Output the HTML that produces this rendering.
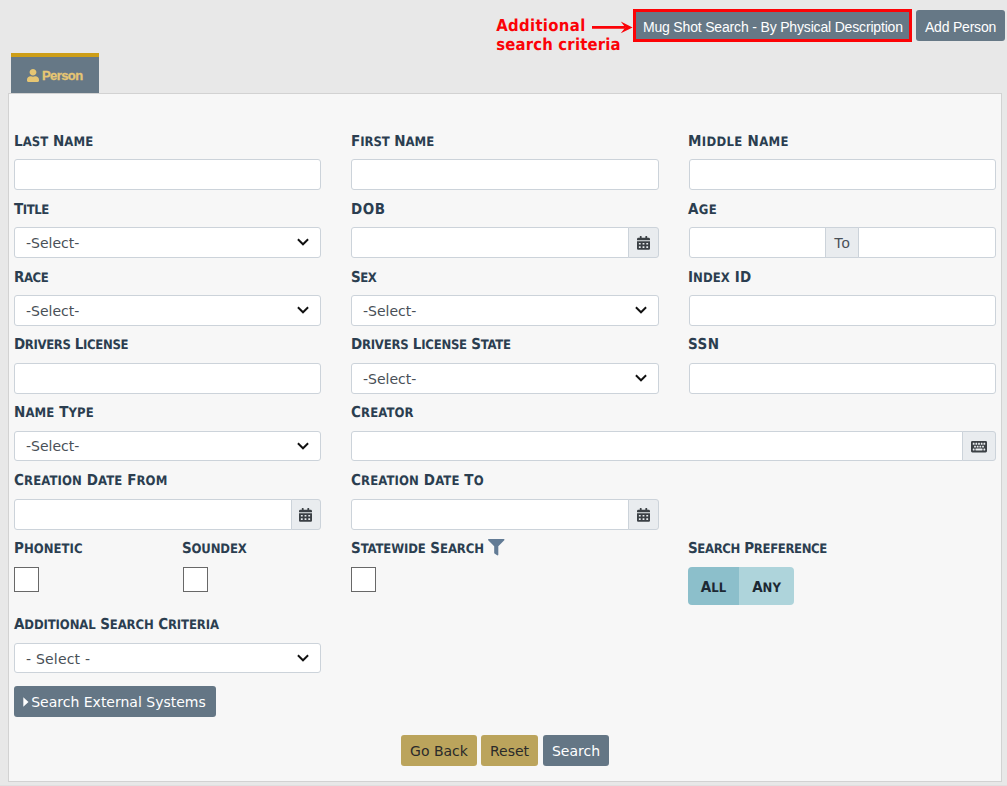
<!DOCTYPE html>
<html lang="en">
<head>
<meta charset="utf-8">
<title>Person Search</title>
<style>
*{box-sizing:border-box;margin:0;padding:0}
html,body{width:1007px;height:786px;overflow:hidden}
body{background:#e8e8e8;font-family:"Liberation Sans",sans-serif;position:relative;color:#2b3e50}
.abs{position:absolute}
.panel{position:absolute;left:8px;top:93px;width:994px;height:689px;background:#f7f7f7;border:1px solid #d2d2d2}
.tab{position:absolute;left:11px;top:53px;width:88px;height:40px;background:#667886;border-top:4px solid #cd9e18;color:#e6c673;font:bold 13px "Liberation Sans",sans-serif}
.tab span{position:absolute;left:31px;top:10.500px;letter-spacing:-0.600px;line-height:16px;-webkit-text-stroke:0.300px #e6c673}
.tab svg{position:absolute;left:16px;top:12px}
.btn{position:absolute;background:#667886;color:#fff;border-radius:3px;font:14px "Liberation Sans",sans-serif;text-align:center;white-space:nowrap}
.lbl{position:absolute;text-rendering:geometricPrecision;font:bold 15px "DejaVu Sans Condensed","Liberation Sans",sans-serif;color:#2b3e50;white-space:nowrap;line-height:20px;height:20px;margin-left:-1px}
.lbl i,.tog i{font-style:normal;text-transform:uppercase;font-size:13px}
.inp{position:absolute;height:31px;background:#fff;border:1px solid #ccd3da;border-radius:3px}
.sel{position:absolute;height:31px;background:#fff;border:1px solid #ccd3da;border-radius:3px;font:14px "DejaVu Sans","Liberation Sans",sans-serif;color:#495057;line-height:30px;padding-left:11px;white-space:pre}
.sel svg{position:absolute;right:10.700px;top:10px}
.addon{position:absolute;height:31px;background:#e9ecef;border:1px solid #ccd3da;border-radius:0 3px 3px 0;font:15px "Liberation Sans",sans-serif;color:#495057;text-align:center;line-height:29px}
.addon svg{position:absolute}
.chk{position:absolute;width:25px;height:25px;background:#fff;border:1px solid #686868}
.red{position:absolute;color:#fb0207;text-rendering:geometricPrecision;font:bold 16.500px "DejaVu Sans Condensed","Liberation Sans",sans-serif;line-height:19px;white-space:nowrap;letter-spacing:0.200px}
.vbtn{position:absolute;height:31px;border-radius:3px;font:14px "DejaVu Sans","Liberation Sans",sans-serif;line-height:33px;text-align:center;white-space:nowrap}
.gold{background:#bba45c;color:#2a2a2a}
.slate{background:#647685;color:#fff}
.tog{position:absolute;height:38px;text-rendering:geometricPrecision;font:bold 15px "DejaVu Sans Condensed","Liberation Sans",sans-serif;color:#1c2833;line-height:40px;text-align:center}
</style>
</head>
<body>
<div class="red" style="left:496.200px;top:15.500px;letter-spacing:0.350px">Additional<br><span style="letter-spacing:0.200px">search criteria</span></div>
<svg class="abs" style="left:590px;top:18px" width="44" height="18" viewBox="0 0 44 18"><path d="M2 9.400H35" stroke="#fb0207" stroke-width="2.800" fill="none"/><path d="M42.600 9.400L30.800 3.500L35.300 9.400L30.800 15.300Z" fill="#fb0207"/></svg>
<div class="btn" style="left:633.400px;top:9.300px;padding-top:0.700px;width:279px;height:33px;border:3px solid #fc0306;border-radius:0;line-height:29px;letter-spacing:-0.170px">Mug Shot Search - By Physical Description</div>
<div class="btn" style="left:916px;top:10px;width:89px;height:31px;line-height:34px;letter-spacing:-0.200px">Add Person</div>
<div class="tab"><svg width="12" height="13" viewBox="0 0 448 512" preserveAspectRatio="none"><path fill="#e6c673" d="M224 256c70.7 0 128-57.3 128-128S294.7 0 224 0 96 57.3 96 128s57.3 128 128 128zm89.6 32h-16.7c-22.2 10.2-46.900 16-72.900 16s-50.600-5.800-72.900-16h-16.700C60.200 288 0 348.200 0 422.400V464c0 26.500 21.500 48 48 48h352c26.500 0 48-21.500 48-48v-41.600c0-74.200-60.200-134.400-134.400-134.400z"/></svg><span>Person</span></div>
<div class="panel"></div>
<div class="abs" style="left:0;top:784.500px;width:1007px;height:2px;background:#e0e0e0"></div>
<div class="lbl" aria-label="Last Name" style="left:15px;top:131px;letter-spacing:0.05px">L<i>ast</i> N<i>ame</i></div>
<div class="lbl" aria-label="First Name" style="left:352px;top:131px;letter-spacing:-0.06px">F<i>irst</i> N<i>ame</i></div>
<div class="lbl" aria-label="Middle Name" style="left:689px;top:131px;letter-spacing:0.31px">M<i>iddle</i> N<i>ame</i></div>
<div class="inp" style="left:14px;top:159px;width:307px"></div>
<div class="inp" style="left:351px;top:159px;width:308px"></div>
<div class="inp" style="left:689px;top:159px;width:307px"></div>
<div class="lbl" aria-label="Title" style="left:15px;top:199px;letter-spacing:-0.45px">T<i>itle</i></div>
<div class="lbl" aria-label="DOB" style="left:352px;top:199px;letter-spacing:0.5px">DOB</div>
<div class="lbl" aria-label="Age" style="left:689px;top:199px;letter-spacing:0.4px">A<i>ge</i></div>
<div class="sel" style="left:14px;top:227px;width:307px">-Select-<svg width="12" height="8" viewBox="0 0 12 8"><path d="M0.900 1.300L6 6.300L11.100 1.300" stroke="#111" stroke-width="1.900" fill="none"/></svg></div>
<div class="inp" style="left:351px;top:227px;width:278px;border-radius:3px 0 0 3px"></div>
<div class="addon" style="left:628px;top:227px;width:31px"><svg style="left:7.600px;top:8px" width="13" height="13.800" viewBox="0 0 448 512" preserveAspectRatio="none"><path fill="#3b4045" d="M0 464c0 26.500 21.500 48 48 48h352c26.500 0 48-21.500 48-48V192H0v272zm320-196c0-6.600 5.400-12 12-12h40c6.600 0 12 5.400 12 12v40c0 6.600-5.400 12-12 12h-40c-6.600 0-12-5.400-12-12v-40zm0 128c0-6.600 5.400-12 12-12h40c6.600 0 12 5.400 12 12v40c0 6.600-5.400 12-12 12h-40c-6.600 0-12-5.400-12-12v-40zM192 268c0-6.600 5.400-12 12-12h40c6.600 0 12 5.400 12 12v40c0 6.600-5.400 12-12 12h-40c-6.600 0-12-5.400-12-12v-40zm0 128c0-6.600 5.400-12 12-12h40c6.600 0 12 5.400 12 12v40c0 6.600-5.400 12-12 12h-40c-6.600 0-12-5.400-12-12v-40zM64 268c0-6.600 5.400-12 12-12h40c6.600 0 12 5.400 12 12v40c0 6.600-5.400 12-12 12H76c-6.600 0-12-5.400-12-12v-40zm0 128c0-6.600 5.400-12 12-12h40c6.600 0 12 5.400 12 12v40c0 6.600-5.400 12-12 12H76c-6.600 0-12-5.400-12-12v-40zM400 64h-48V16c0-8.800-7.200-16-16-16h-32c-8.800 0-16 7.200-16 16v48H160V16c0-8.800-7.200-16-16-16h-32c-8.800 0-16 7.200-16 16v48H48C21.500 64 0 85.500 0 112v48h448v-48c0-26.500-21.500-48-48-48z"/></svg></div>
<div class="inp" style="left:689px;top:227px;width:137px;border-radius:3px 0 0 3px"></div>
<div class="addon" style="left:825px;top:227px;width:34px;border-radius:0">To</div>
<div class="inp" style="left:858px;top:227px;width:138px;border-radius:0 3px 3px 0"></div>
<div class="lbl" aria-label="Race" style="left:15px;top:267px;letter-spacing:-0.43px">R<i>ace</i></div>
<div class="lbl" aria-label="Sex" style="left:352px;top:267px;letter-spacing:-0.5px">S<i>ex</i></div>
<div class="lbl" aria-label="Index ID" style="left:689px;top:267px;letter-spacing:0.09px">I<i>ndex</i> ID</div>
<div class="sel" style="left:14px;top:295px;width:307px">-Select-<svg width="12" height="8" viewBox="0 0 12 8"><path d="M0.900 1.300L6 6.300L11.100 1.300" stroke="#111" stroke-width="1.900" fill="none"/></svg></div>
<div class="sel" style="left:351px;top:295px;width:308px">-Select-<svg width="12" height="8" viewBox="0 0 12 8"><path d="M0.900 1.300L6 6.300L11.100 1.300" stroke="#111" stroke-width="1.900" fill="none"/></svg></div>
<div class="inp" style="left:689px;top:295px;width:307px"></div>
<div class="lbl" aria-label="Drivers License" style="left:15px;top:334.3px;letter-spacing:-0.36px">D<i>rivers</i> L<i>icense</i></div>
<div class="lbl" aria-label="Drivers License State" style="left:352px;top:334.3px;letter-spacing:-0.24px">D<i>rivers</i> L<i>icense</i> S<i>tate</i></div>
<div class="lbl" aria-label="SSN" style="left:689px;top:334.3px;letter-spacing:0.5px">SSN</div>
<div class="inp" style="left:14px;top:363px;width:307px"></div>
<div class="sel" style="left:351px;top:363px;width:308px">-Select-<svg width="12" height="8" viewBox="0 0 12 8"><path d="M0.900 1.300L6 6.300L11.100 1.300" stroke="#111" stroke-width="1.900" fill="none"/></svg></div>
<div class="inp" style="left:689px;top:363px;width:307px"></div>
<div class="lbl" aria-label="Name Type" style="left:15px;top:402.4px;letter-spacing:0.09px">N<i>ame</i> T<i>ype</i></div>
<div class="lbl" aria-label="Creator" style="left:352px;top:402.4px;letter-spacing:0.11px">C<i>reator</i></div>
<div class="sel" style="left:14px;top:431px;width:307px;height:30px;line-height:29px">-Select-<svg width="12" height="8" viewBox="0 0 12 8"><path d="M0.900 1.300L6 6.300L11.100 1.300" stroke="#111" stroke-width="1.900" fill="none"/></svg></div>
<div class="inp" style="left:351px;top:431px;width:612px;height:30px;border-radius:3px 0 0 3px"></div>
<div class="addon" style="left:962px;top:431px;width:34px;height:30px"><svg style="left:7.600px;top:6.600px" width="16" height="15.300" viewBox="0 0 576 512" preserveAspectRatio="none"><path fill="#3b4045" fill-rule="evenodd" d="M48 64h480a48 48 0 0 1 48 48v288a48 48 0 0 1-48 48H48a48 48 0 0 1-48-48V112a48 48 0 0 1 48-48zM76 128h40a12 12 0 0 1 12 12v40a12 12 0 0 1-12 12h-40a12 12 0 0 1-12-12v-40a12 12 0 0 1 12-12zM172 128h40a12 12 0 0 1 12 12v40a12 12 0 0 1-12 12h-40a12 12 0 0 1-12-12v-40a12 12 0 0 1 12-12zM268 128h40a12 12 0 0 1 12 12v40a12 12 0 0 1-12 12h-40a12 12 0 0 1-12-12v-40a12 12 0 0 1 12-12zM364 128h40a12 12 0 0 1 12 12v40a12 12 0 0 1-12 12h-40a12 12 0 0 1-12-12v-40a12 12 0 0 1 12-12zM460 128h40a12 12 0 0 1 12 12v40a12 12 0 0 1-12 12h-40a12 12 0 0 1-12-12v-40a12 12 0 0 1 12-12zM124 224h40a12 12 0 0 1 12 12v40a12 12 0 0 1-12 12h-40a12 12 0 0 1-12-12v-40a12 12 0 0 1 12-12zM220 224h40a12 12 0 0 1 12 12v40a12 12 0 0 1-12 12h-40a12 12 0 0 1-12-12v-40a12 12 0 0 1 12-12zM316 224h40a12 12 0 0 1 12 12v40a12 12 0 0 1-12 12h-40a12 12 0 0 1-12-12v-40a12 12 0 0 1 12-12zM412 224h40a12 12 0 0 1 12 12v40a12 12 0 0 1-12 12h-40a12 12 0 0 1-12-12v-40a12 12 0 0 1 12-12zM76 320h40a12 12 0 0 1 12 12v40a12 12 0 0 1-12 12h-40a12 12 0 0 1-12-12v-40a12 12 0 0 1 12-12zM172 320h232a12 12 0 0 1 12 12v40a12 12 0 0 1-12 12h-232a12 12 0 0 1-12-12v-40a12 12 0 0 1 12-12zM460 320h40a12 12 0 0 1 12 12v40a12 12 0 0 1-12 12h-40a12 12 0 0 1-12-12v-40a12 12 0 0 1 12-12z"/></svg></div>
<div class="lbl" aria-label="Creation Date From" style="left:15px;top:470px;letter-spacing:0.11px">C<i>reation</i> D<i>ate</i> F<i>rom</i></div>
<div class="lbl" aria-label="Creation Date To" style="left:352px;top:470px;letter-spacing:0.12px">C<i>reation</i> D<i>ate</i> T<i>o</i></div>
<div class="inp" style="left:14px;top:499px;width:278px;border-radius:3px 0 0 3px"></div>
<div class="addon" style="left:291px;top:499px;width:30px"><svg style="left:7.300px;top:8px" width="13" height="13.800" viewBox="0 0 448 512" preserveAspectRatio="none"><path fill="#3b4045" d="M0 464c0 26.500 21.500 48 48 48h352c26.500 0 48-21.500 48-48V192H0v272zm320-196c0-6.600 5.400-12 12-12h40c6.600 0 12 5.400 12 12v40c0 6.600-5.400 12-12 12h-40c-6.600 0-12-5.400-12-12v-40zm0 128c0-6.600 5.400-12 12-12h40c6.600 0 12 5.400 12 12v40c0 6.600-5.400 12-12 12h-40c-6.600 0-12-5.400-12-12v-40zM192 268c0-6.600 5.400-12 12-12h40c6.600 0 12 5.400 12 12v40c0 6.600-5.400 12-12 12h-40c-6.600 0-12-5.400-12-12v-40zm0 128c0-6.600 5.400-12 12-12h40c6.600 0 12 5.400 12 12v40c0 6.600-5.400 12-12 12h-40c-6.600 0-12-5.400-12-12v-40zM64 268c0-6.600 5.400-12 12-12h40c6.600 0 12 5.400 12 12v40c0 6.600-5.400 12-12 12H76c-6.600 0-12-5.400-12-12v-40zm0 128c0-6.600 5.400-12 12-12h40c6.600 0 12 5.400 12 12v40c0 6.600-5.400 12-12 12H76c-6.600 0-12-5.400-12-12v-40zM400 64h-48V16c0-8.800-7.200-16-16-16h-32c-8.800 0-16 7.200-16 16v48H160V16c0-8.800-7.200-16-16-16h-32c-8.800 0-16 7.200-16 16v48H48C21.500 64 0 85.500 0 112v48h448v-48c0-26.500-21.500-48-48-48z"/></svg></div>
<div class="inp" style="left:351px;top:499px;width:278px;border-radius:3px 0 0 3px"></div>
<div class="addon" style="left:628px;top:499px;width:31px"><svg style="left:7.600px;top:8px" width="13" height="13.800" viewBox="0 0 448 512" preserveAspectRatio="none"><path fill="#3b4045" d="M0 464c0 26.500 21.500 48 48 48h352c26.500 0 48-21.500 48-48V192H0v272zm320-196c0-6.600 5.400-12 12-12h40c6.600 0 12 5.400 12 12v40c0 6.600-5.400 12-12 12h-40c-6.600 0-12-5.400-12-12v-40zm0 128c0-6.600 5.400-12 12-12h40c6.600 0 12 5.400 12 12v40c0 6.600-5.400 12-12 12h-40c-6.600 0-12-5.400-12-12v-40zM192 268c0-6.600 5.400-12 12-12h40c6.600 0 12 5.400 12 12v40c0 6.600-5.400 12-12 12h-40c-6.600 0-12-5.400-12-12v-40zm0 128c0-6.600 5.400-12 12-12h40c6.600 0 12 5.400 12 12v40c0 6.600-5.400 12-12 12h-40c-6.600 0-12-5.400-12-12v-40zM64 268c0-6.600 5.400-12 12-12h40c6.600 0 12 5.400 12 12v40c0 6.600-5.400 12-12 12H76c-6.600 0-12-5.400-12-12v-40zm0 128c0-6.600 5.400-12 12-12h40c6.600 0 12 5.400 12 12v40c0 6.600-5.400 12-12 12H76c-6.600 0-12-5.400-12-12v-40zM400 64h-48V16c0-8.800-7.200-16-16-16h-32c-8.800 0-16 7.200-16 16v48H160V16c0-8.800-7.200-16-16-16h-32c-8.800 0-16 7.200-16 16v48H48C21.500 64 0 85.500 0 112v48h448v-48c0-26.500-21.500-48-48-48z"/></svg></div>
<div class="lbl" aria-label="Phonetic" style="left:15px;top:538px;letter-spacing:0.04px">P<i>honetic</i></div>
<div class="lbl" aria-label="Soundex" style="left:183px;top:538px;letter-spacing:-0.15px">S<i>oundex</i></div>
<div class="lbl" aria-label="Statewide Search" style="left:352px;top:538px;letter-spacing:-0.1px">S<i>tatewide</i> S<i>earch</i></div>
<div class="lbl" aria-label="Search Preference" style="left:689px;top:538px;letter-spacing:-0.36px">S<i>earch</i> P<i>reference</i></div>
<svg class="abs" style="left:488px;top:539px" width="16.500" height="16.500" viewBox="0 0 512 512"><path fill="#627b95" d="M487.976 0H24.028C2.710 0-8.047 25.866 7.058 40.971L192 225.941V432c0 7.831 3.821 15.170 10.237 19.662l80 55.980C298.020 518.690 320 507.493 320 487.980V225.941l184.947-184.970C520.021 25.896 509.338 0 487.976 0z"/></svg>
<div class="chk" style="left:14px;top:567px"></div>
<div class="chk" style="left:183px;top:567px"></div>
<div class="chk" style="left:351px;top:567px"></div>
<div class="tog" style="left:688px;top:567px;width:51px;background:#8cbfcb;border-radius:4px 0 0 4px">A<i>ll</i></div>
<div class="tog" style="left:739px;top:567px;width:55px;background:#aed4db;border-radius:0 4px 4px 0">A<i>ny</i></div>
<div class="lbl" aria-label="Additional Search Criteria" style="left:15px;top:614px;letter-spacing:-0.12px">A<i>dditional</i> S<i>earch</i> C<i>riteria</i></div>
<div class="sel" style="left:14px;top:643px;width:307px;height:30px;line-height:29px;letter-spacing:0.200px;line-height:31px">- Select -<svg width="12" height="8" viewBox="0 0 12 8"><path d="M0.900 1.300L6 6.300L11.100 1.300" stroke="#111" stroke-width="1.900" fill="none"/></svg></div>
<div class="vbtn slate" style="left:14px;top:686px;width:202px;padding-left:7px;line-height:33px"><svg class="abs" style="left:9px;top:10.500px" width="6" height="10" viewBox="0 0 6 10"><path d="M0.300 0.300L5.500 5L0.300 9.700Z" fill="#fff"/></svg>Search External Systems</div>
<div class="vbtn gold" style="left:401px;top:735px;width:76px">Go Back</div>
<div class="vbtn gold" style="left:481px;top:735px;width:57px">Reset</div>
<div class="vbtn slate" style="left:543px;top:735px;width:66px">Search</div>
</body>
</html>
